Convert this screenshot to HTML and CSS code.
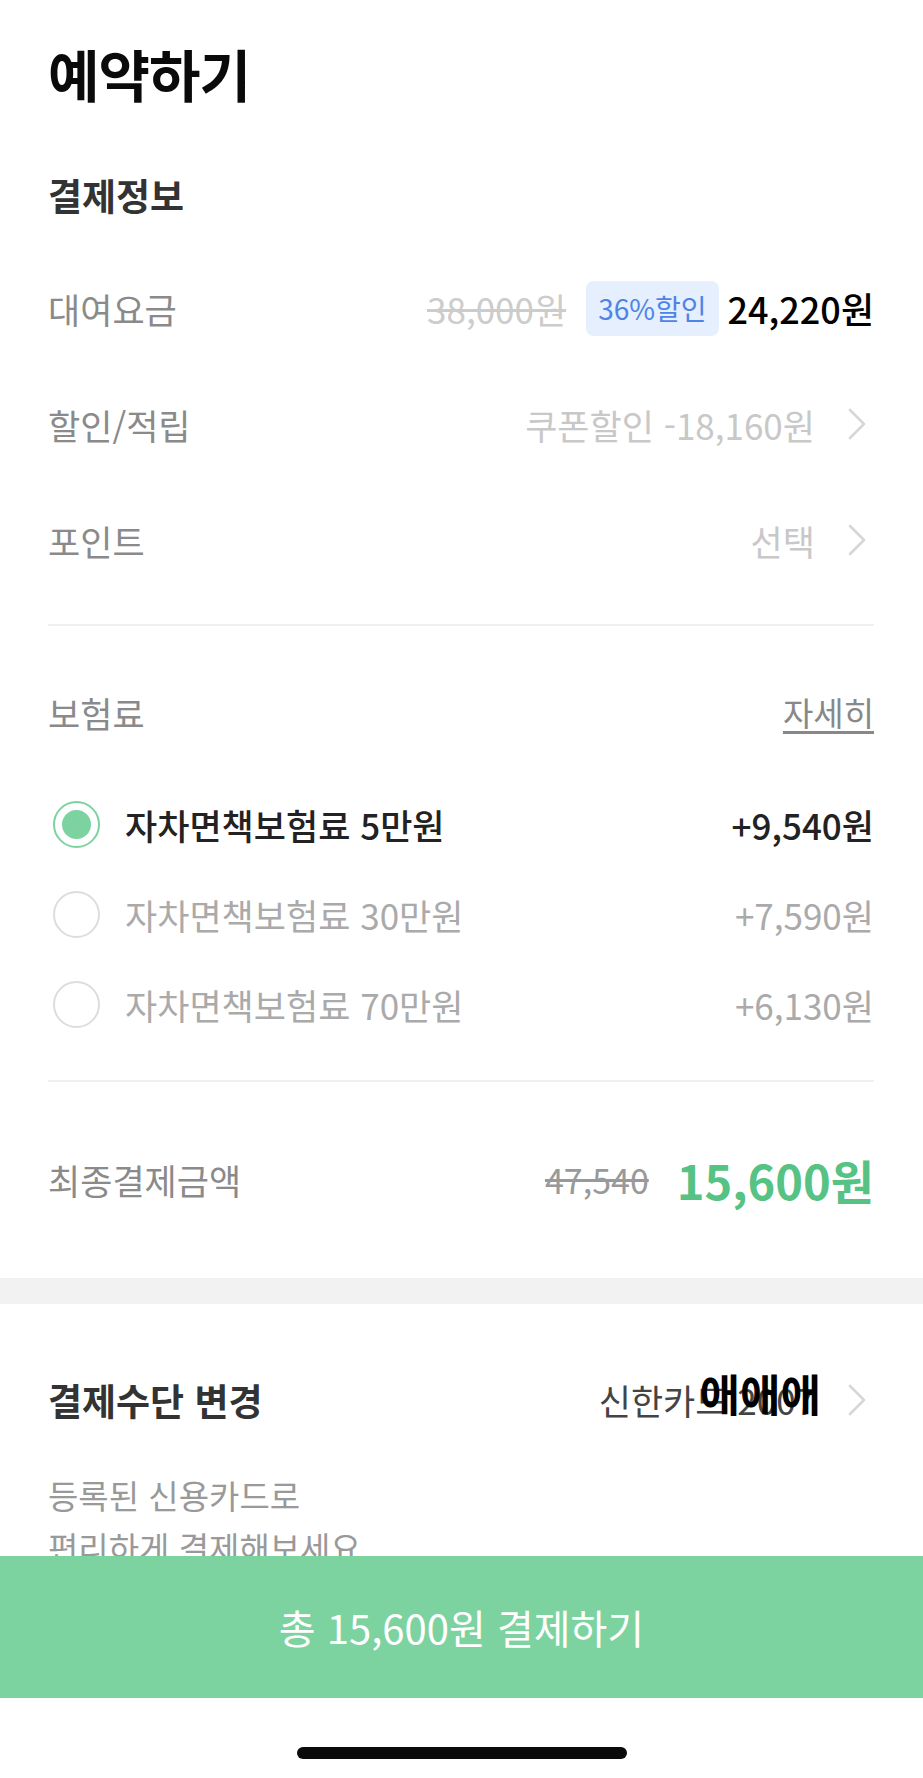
FILE: index.html
```html
<!DOCTYPE html>
<html lang="ko">
<head>
<meta charset="utf-8">
<title>예약하기</title>
<link rel="stylesheet" href="styles.css">
</head>
<body>
<main class="page">
  <header class="head">
    <h1 class="title">예약하기</h1>
  </header>

  <section class="info">
    <h2 class="section-title">결제정보</h2>

    <div class="row">
      <span class="label">대여요금</span>
      <div class="value">
        <span class="strike">38,000원</span>
        <span class="badge">36%할인</span>
        <span class="price">24,220원</span>
      </div>
    </div>

    <div class="row">
      <span class="label">할인/적립</span>
      <div class="value">
        <span class="muted">쿠폰할인 -18,160원</span>
        <svg class="chev" viewBox="0 0 20 34" aria-hidden="true"><path d="M3 3 L17 17 L3 31" /></svg>
      </div>
    </div>

    <div class="row">
      <span class="label">포인트</span>
      <div class="value">
        <span class="muted">선택</span>
        <svg class="chev" viewBox="0 0 20 34" aria-hidden="true"><path d="M3 3 L17 17 L3 31" /></svg>
      </div>
    </div>

    <hr class="divider">

    <div class="ins-head">
      <span class="label">보험료</span>
      <a class="more">자세히</a>
    </div>

    <ul class="options">
      <li class="option selected">
        <span class="radio"></span>
        <span class="opt-name">자차면책보험료 5만원</span>
        <span class="opt-price">+9,540원</span>
      </li>
      <li class="option">
        <span class="radio"></span>
        <span class="opt-name">자차면책보험료 30만원</span>
        <span class="opt-price">+7,590원</span>
      </li>
      <li class="option">
        <span class="radio"></span>
        <span class="opt-name">자차면책보험료 70만원</span>
        <span class="opt-price">+6,130원</span>
      </li>
    </ul>

    <hr class="divider divider-second">

    <div class="total">
      <span class="label">최종결제금액</span>
      <div class="value">
        <span class="old">47,540</span>
        <span class="final">15,600원</span>
      </div>
    </div>
  </section>

  <div class="band"></div>

  <section class="payment">
    <div class="pay-row">
      <span class="pay-title">결제수단 변경</span>
      <div class="value">
        <span class="card">신한카드 2007<span class="overlay">애애애</span></span>
        <svg class="chev" viewBox="0 0 20 34" aria-hidden="true"><path d="M3 3 L17 17 L3 31" /></svg>
      </div>
    </div>
    <p class="desc">등록된 신용카드로<br>편리하게 결제해보세요</p>
  </section>
</main>

<footer class="bottom">
  <button class="pay-btn" type="button">총 15,600원 결제하기</button>
  <div class="home"><span class="home-bar"></span></div>
</footer>
</body>
</html>
```

FILE: styles.css
```css
* {
  box-sizing: border-box;
  margin: 0;
  padding: 0;
}

html, body {
  background: #ffffff;
}

body {
  font-family: "Noto Sans CJK KR", "Noto Sans", sans-serif;
  color: #222222;
  width: 923px;
  height: 1778px;
  overflow: hidden;
}

.head {
  padding: 43px 48px 0;
}

.title {
  font-size: 56px;
  line-height: 60px;
  font-weight: 700;
  color: #0a0a0a;
  letter-spacing: -1px;
}

.info {
  padding: 72px 49px 0 48px;
}

.section-title {
  font-size: 37px;
  line-height: 40px;
  font-weight: 700;
  color: #333333;
  margin-bottom: 35px;
}

.row {
  height: 116px;
  display: flex;
  align-items: center;
  justify-content: space-between;
}

.label {
  font-size: 35px;
  color: #8a8a8a;
}

.value {
  display: flex;
  align-items: center;
}

.strike {
  font-size: 35px;
  color: #cccccc;
  text-decoration: line-through;
  margin-right: 20px;
}

.badge {
  font-size: 28px;
  color: #4f84e6;
  background: #e5effd;
  border-radius: 8px;
  height: 55px;
  padding: 0 12px;
  display: flex;
  align-items: center;
  margin-right: 9px;
}

.price {
  font-size: 36px;
  font-weight: 500;
  color: #000000;
}

.muted {
  font-size: 35px;
  color: #c8c8c8;
}

.chev {
  width: 20px;
  height: 34px;
  margin-left: 32px;
  margin-right: 7px;
  fill: none;
  stroke: #d6d6d6;
  stroke-width: 2.6;
  stroke-linecap: round;
  stroke-linejoin: round;
  flex: none;
}

.divider {
  border: 0;
  height: 2px;
  background: #f0f0f0;
  margin-top: 26px;
}

.ins-head {
  height: 60px;
  margin-top: 56px;
  display: flex;
  justify-content: space-between;
  align-items: center;
}

.more {
  font-size: 33px;
  color: #888888;
  text-decoration: underline;
  text-underline-offset: 5px;
}

.options {
  list-style: none;
  margin-top: 37px;
}

.option {
  height: 90px;
  display: flex;
  align-items: center;
}

.radio {
  width: 47px;
  height: 47px;
  border-radius: 50%;
  border: 2px solid #dddddd;
  margin-left: 5px;
  margin-right: 25px;
  display: flex;
  align-items: center;
  justify-content: center;
  flex: none;
}

.selected .radio {
  border-color: #7dd3a0;
}

.selected .radio::after {
  content: "";
  width: 29px;
  height: 29px;
  border-radius: 50%;
  background: #7dd3a0;
}

.opt-name {
  flex: 1;
  font-size: 35px;
  color: #aaaaaa;
}

.opt-price {
  font-size: 35px;
  color: #aaaaaa;
}

.selected .opt-name,
.selected .opt-price {
  color: #222222;
  font-weight: 500;
}

.divider-second {
  margin-top: 31px;
}

.total {
  height: 100px;
  margin-top: 47px;
  display: flex;
  align-items: center;
  justify-content: space-between;
}

.old {
  font-size: 34px;
  color: #999999;
  text-decoration: line-through;
  margin-right: 28px;
}

.final {
  font-size: 47px;
  font-weight: 700;
  color: #56c283;
}

.band {
  height: 26px;
  background: #f2f2f2;
  margin-top: 49px;
}

.payment {
  padding: 66px 49px 0 48px;
}

.pay-row {
  height: 60px;
  display: flex;
  justify-content: space-between;
  align-items: center;
}

.pay-title {
  font-size: 37px;
  font-weight: 700;
  color: #333333;
}

.card {
  position: relative;
  font-size: 35px;
  line-height: 40px;
  color: #444444;
}

.overlay {
  position: absolute;
  right: -6px;
  top: -9px;
  font-size: 44px;
  line-height: 44px;
  font-weight: 700;
  color: #000000;
  white-space: nowrap;
}

.desc {
  margin-top: 39px;
  font-size: 33px;
  line-height: 52px;
  color: #999999;
}

.bottom {
  position: fixed;
  left: 0;
  right: 0;
  bottom: 0;
}

.pay-btn {
  display: block;
  width: 100%;
  height: 142px;
  border: 0;
  background: #7dd3a0;
  color: #ffffff;
  font-family: inherit;
  font-size: 40px;
}

.home {
  height: 80px;
  background: #ffffff;
  display: flex;
  justify-content: center;
  padding-top: 49px;
}

.home-bar {
  width: 330px;
  height: 12px;
  border-radius: 6px;
  background: #0a0a0a;
}
```
